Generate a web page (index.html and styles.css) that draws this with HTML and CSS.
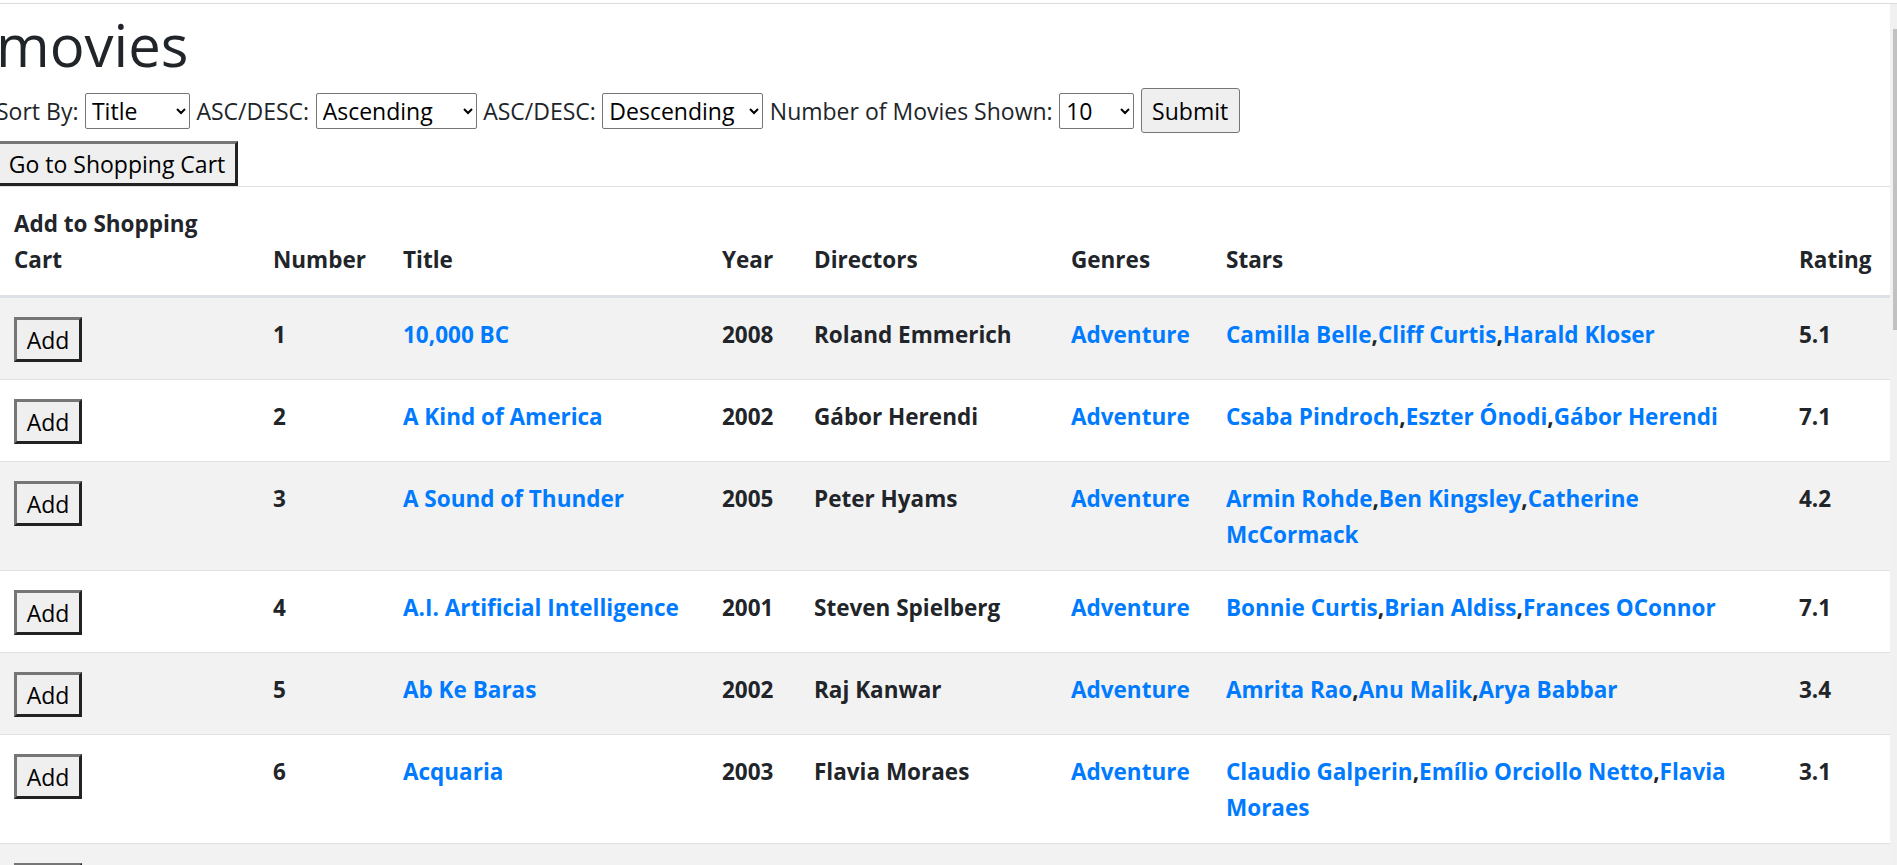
FILE: index.html
```html
<!DOCTYPE html>
<html lang="en">
<head>
<meta charset="utf-8">
<title>movies</title>
<link rel="stylesheet" href="styles.css">
</head>
<body>
<div class="frame">
  <div class="viewport">
    <div class="page">
      <div class="content">
        <h1 class="title">movies</h1>
        <form class="controls">
          <label class="lbl">Sort By:</label>
          <select class="sel sel-sort"><option>Title</option><option>Rating</option></select>
          <label class="lbl">ASC/DESC:</label>
          <select class="sel sel-order"><option>Ascending</option><option>Descending</option></select>
          <label class="lbl">ASC/DESC:</label>
          <select class="sel sel-order"><option>Descending</option><option>Ascending</option></select>
          <label class="lbl">Number of Movies Shown:</label>
          <select class="sel sel-num"><option>10</option><option>25</option><option>50</option><option>100</option></select>
          <button type="button" class="btn-submit">Submit</button>
        </form>
        <div class="cart-row">
          <button type="button" class="btn-old btn-cart">Go to Shopping Cart</button>
        </div>
        <table class="movies">
          <colgroup>
            <col class="c-add"><col class="c-num"><col class="c-title"><col class="c-year">
            <col class="c-dir"><col class="c-gen"><col class="c-stars"><col class="c-rating">
          </colgroup>
          <thead>
            <tr>
              <th>Add to Shopping Cart</th><th>Number</th><th>Title</th><th>Year</th>
              <th>Directors</th><th>Genres</th><th>Stars</th><th>Rating</th>
            </tr>
          </thead>
          <tbody>
            <tr>
              <td><button type="button" class="btn-old btn-add">Add</button></td>
              <td>1</td><td><a href="#">10,000 BC</a></td><td>2008</td><td>Roland Emmerich</td>
              <td><a href="#">Adventure</a></td>
              <td><a href="#">Camilla Belle</a>,<a href="#">Cliff Curtis</a>,<a href="#">Harald Kloser</a></td>
              <td>5.1</td>
            </tr>
            <tr>
              <td><button type="button" class="btn-old btn-add">Add</button></td>
              <td>2</td><td><a href="#">A Kind of America</a></td><td>2002</td><td>Gábor Herendi</td>
              <td><a href="#">Adventure</a></td>
              <td><a href="#">Csaba Pindroch</a>,<a href="#">Eszter Ónodi</a>,<a href="#">Gábor Herendi</a></td>
              <td>7.1</td>
            </tr>
            <tr>
              <td><button type="button" class="btn-old btn-add">Add</button></td>
              <td>3</td><td><a href="#">A Sound of Thunder</a></td><td>2005</td><td>Peter Hyams</td>
              <td><a href="#">Adventure</a></td>
              <td><a href="#">Armin Rohde</a>,<a href="#">Ben Kingsley</a>,<a href="#">Catherine McCormack</a></td>
              <td>4.2</td>
            </tr>
            <tr>
              <td><button type="button" class="btn-old btn-add">Add</button></td>
              <td>4</td><td><a href="#">A.I. Artificial Intelligence</a></td><td>2001</td><td>Steven Spielberg</td>
              <td><a href="#">Adventure</a></td>
              <td><a href="#">Bonnie Curtis</a>,<a href="#">Brian Aldiss</a>,<a href="#">Frances OConnor</a></td>
              <td>7.1</td>
            </tr>
            <tr>
              <td><button type="button" class="btn-old btn-add">Add</button></td>
              <td>5</td><td><a href="#">Ab Ke Baras</a></td><td>2002</td><td>Raj Kanwar</td>
              <td><a href="#">Adventure</a></td>
              <td><a href="#">Amrita Rao</a>,<a href="#">Anu Malik</a>,<a href="#">Arya Babbar</a></td>
              <td>3.4</td>
            </tr>
            <tr>
              <td><button type="button" class="btn-old btn-add">Add</button></td>
              <td>6</td><td><a href="#">Acquaria</a></td><td>2003</td><td>Flavia Moraes</td>
              <td><a href="#">Adventure</a></td>
              <td><a href="#">Claudio Galperin</a>,<a href="#">Emílio Orciollo Netto</a>,<a href="#">Flavia Moraes</a></td>
              <td>3.1</td>
            </tr>
            <tr>
              <td><button type="button" class="btn-old btn-add">Add</button></td>
              <td>7</td><td><a href="#">Adventure</a></td><td></td><td></td>
              <td><a href="#">Adventure</a></td><td></td><td></td>
            </tr>
          </tbody>
        </table>
      </div>
    </div>
    <div class="scrollbar"><div class="thumb"></div></div>
  </div>
</div>
</body>
</html>
```

FILE: styles.css
```css
html, body {
  margin: 0;
  padding: 0;
  height: 100%;
  overflow: hidden;
  background: #fff;
}

body {
  font-family: "Open Sans", "Noto Sans", sans-serif;
  font-size: 22.5px;
  line-height: 36px;
  color: #212529;
}

.frame {
  height: 865px;
  padding-top: 3px;
  box-sizing: border-box;
  display: flex;
  flex-direction: column;
}

.viewport {
  flex: 1;
  display: flex;
  border-top: 1px solid #dcdcdc;
  min-height: 0;
}

.page {
  flex: 1;
  overflow: hidden;
  min-width: 0;
}

.content {
  margin-left: -4px;
  width: 1894px;
}

.title {
  margin: 0 0 3px 0;
  font-size: 58px;
  line-height: 81px;
  font-weight: 400;
  color: #212529;
}

.controls {
  display: flex;
  align-items: center;
  gap: 6.5px;
  height: 45px;
  margin: 0;
  font-size: 23px;
}

.lbl {
  white-space: nowrap;
}

.sel {
  font-family: inherit;
  font-size: 23px;
  height: 36px;
  border: 1px solid #767676;
  border-radius: 2px;
  background: #fff;
  color: #000;
  padding: 0 2px;
  box-sizing: border-box;
}

.sel-sort { width: 105px; }
.sel-order { width: 161px; }
.sel-num { width: 75px; }

.btn-submit {
  font-family: inherit;
  font-size: 23px;
  line-height: 36px;
  height: 45px;
  width: 99px;
  padding: 0;
  border: 1px solid #767676;
  border-radius: 3px;
  background: #efefef;
  color: #000;
  box-sizing: border-box;
}

.cart-row {
  margin-top: 8px;
  height: 45px;
}

.btn-old {
  font-family: inherit;
  font-size: 23px;
  line-height: 36px;
  height: 45px;
  padding: 0;
  border-style: solid;
  border-width: 3px;
  border-color: #767676 #222 #222 #767676;
  background: #efefef;
  color: #000;
  box-sizing: border-box;
  display: block;
}

.btn-cart { width: 242px; }
.btn-add { width: 68px; }

.movies {
  width: 1894px;
  border-collapse: collapse;
  table-layout: fixed;
}

.c-add { width: 259px; }
.c-num { width: 130px; }
.c-title { width: 319px; }
.c-year { width: 92px; }
.c-dir { width: 257px; }
.c-gen { width: 155px; }
.c-stars { width: 573px; }
.c-rating { width: 109px; }

.movies th,
.movies td {
  padding: 19px 18px 17px 18px;
  text-align: left;
  font-weight: 700;
  border-top: 1px solid #dee2e6;
}

.movies th {
  vertical-align: bottom;
  border-bottom: 3px solid #dee2e6;
}

.movies td {
  vertical-align: top;
}

.movies tbody tr:nth-child(odd) {
  background: #f2f2f2;
}

.movies a {
  color: #007bff;
  text-decoration: none;
}

.scrollbar {
  width: 7px;
  background: #f1f1f1;
  flex: none;
}

.thumb {
  margin-top: 25px;
  margin-left: 3px;
  height: 301px;
  background: #c1c1c1;
}
```
